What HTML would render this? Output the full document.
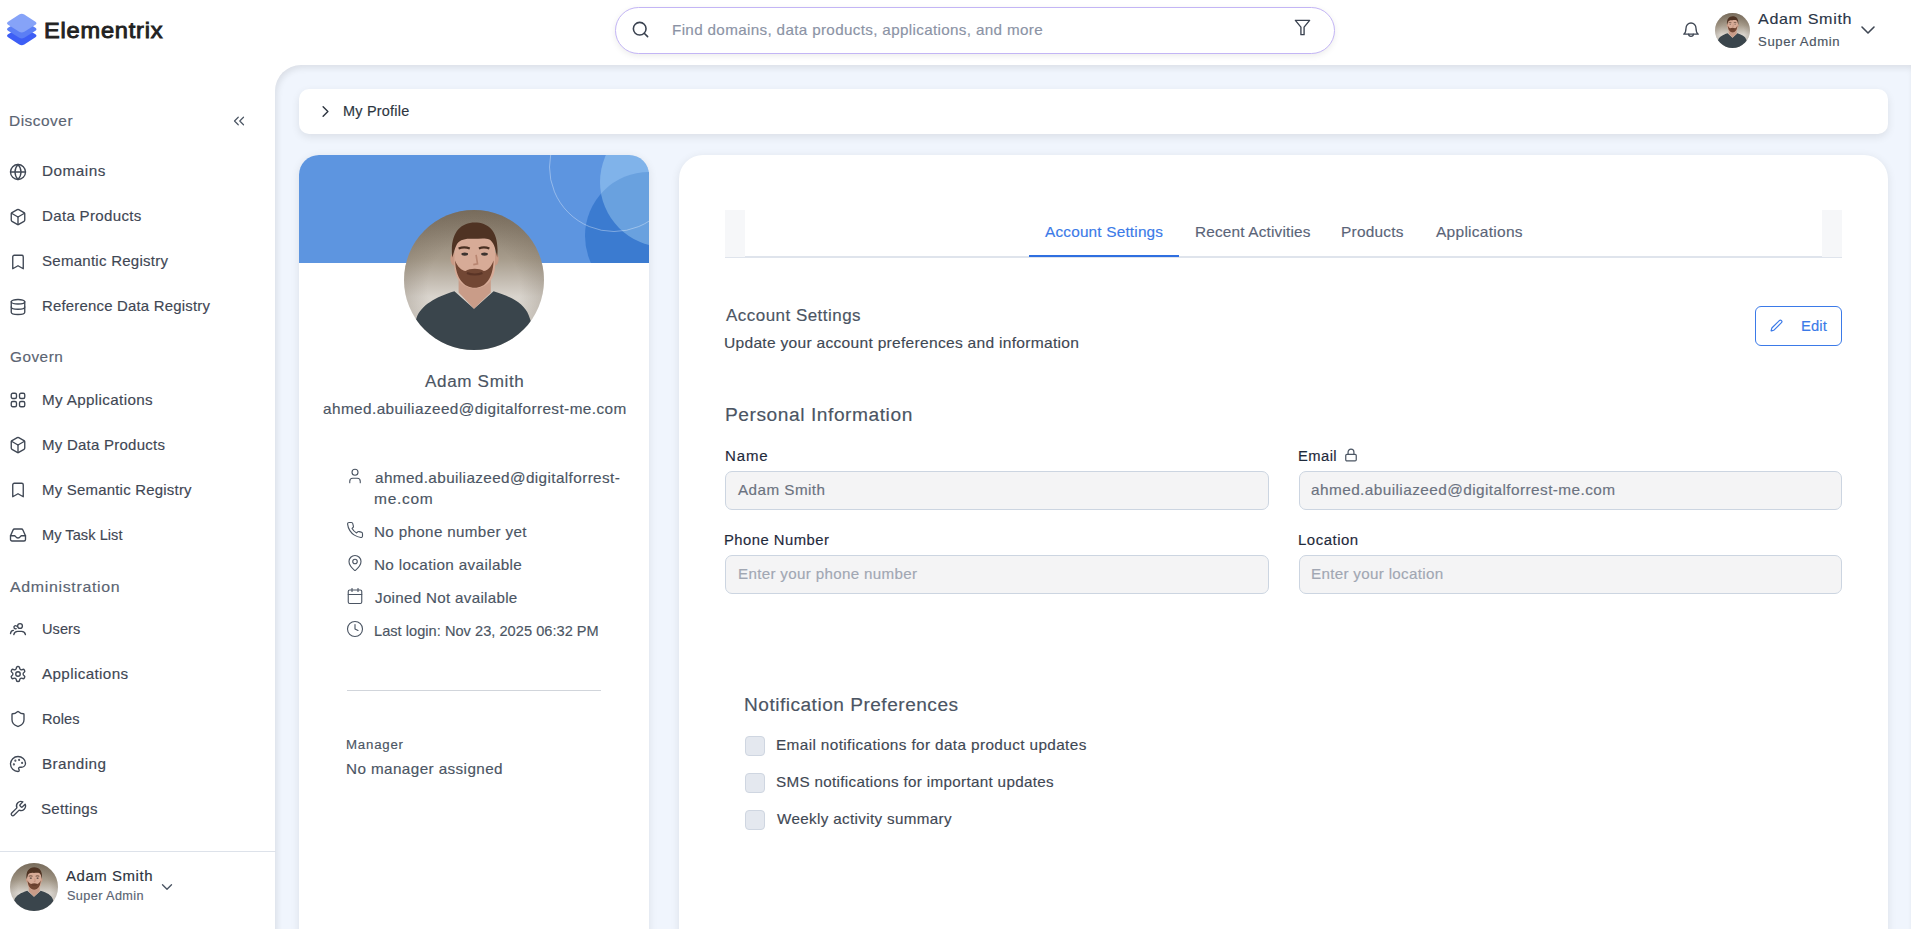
<!DOCTYPE html>
<html><head><meta charset="utf-8"><title>My Profile</title>
<style>
*{box-sizing:border-box;margin:0;padding:0}
html,body{width:1914px;height:929px;overflow:hidden;background:#fff;font-family:"Liberation Sans",sans-serif}
.t{position:absolute;white-space:nowrap;transform-origin:0 0;-webkit-text-stroke:0.15px currentColor}
.ic{position:absolute;overflow:visible}
.abs{position:absolute}
</style></head><body>
<div class="abs" style="left:275px;top:65px;width:1636px;height:900px;background:#f0f5fd;border-top-left-radius:26px;box-shadow:inset 2px 3px 6px rgba(0,0,0,0.09)"></div>
<div class="abs" style="left:0;top:851px;width:276px;height:1px;background:#dde2ea"></div>
<div class="abs" style="left:615px;top:7px;width:720px;height:47px;border:1px solid #c3b5f5;border-radius:24px;background:#fff;box-shadow:0 2px 6px rgba(0,0,0,0.08)"></div>
<svg class="ic" style="left:4.8px;top:13.2px;width:33.5px;height:34.5px" viewBox="0 0 33 34" preserveAspectRatio="none">
<path d="M16.5 13 L30 21 Q32 22.5 30 24 L19 31 Q16.5 32.6 14 31 L3 24 Q1 22.5 3 21 Z" fill="#3d5ef5"/>
<path d="M16.5 6.5 L30 14.5 Q32 16 30 17.5 L19 24.5 Q16.5 26 14 24.5 L3 17.5 Q1 16 3 14.5 Z" fill="#5b7ef5"/>
<path d="M14 1.5 Q16.5 0 19 1.5 L30 8.5 Q32 10 30 11.5 L19 18.5 Q16.5 20 14 18.5 L3 11.5 Q1 10 3 8.5 Z" fill="#86a3f8"/>
</svg>
<div class="abs" style="left:299px;top:89px;width:1589px;height:45px;background:#fff;border-radius:10px;box-shadow:0 3px 8px rgba(0,0,0,0.09)"></div>
<div class="abs" style="left:299px;top:155px;width:350px;height:800px;background:#fff;border-radius:20px;box-shadow:0 2px 10px rgba(0,0,0,0.09);overflow:hidden"><div class="abs" style="left:0;top:0;width:350px;height:108px;background:#5d95e0;overflow:hidden"><div class="abs" style="left:286px;top:17px;width:128px;height:128px;border-radius:50%;background:#3b7bd0"></div><div class="abs" style="left:301px;top:-38px;width:130px;height:130px;border-radius:50%;background:rgba(200,240,255,0.33)"></div><div class="abs" style="left:250px;top:-53px;width:130px;height:130px;border-radius:50%;border:1.5px solid rgba(255,255,255,0.35)"></div></div></div>
<svg class="ic" style="left:404.0px;top:210.0px;width:140px;height:140px" viewBox="0 0 100 100">
<defs><linearGradient id="bga" x1="0" y1="0" x2="0" y2="1"><stop offset="0" stop-color="#7b6f5f"/><stop offset="0.35" stop-color="#a79c8c"/><stop offset="0.62" stop-color="#d9d4cd"/><stop offset="1" stop-color="#e6e3de"/></linearGradient>
<radialGradient id="vga" cx="50%" cy="55%" r="55%"><stop offset="0.6" stop-color="#6f6353" stop-opacity="0"/><stop offset="1" stop-color="#6f6353" stop-opacity="0.3"/></radialGradient>
<clipPath id="cla"><circle cx="50" cy="50" r="50"/></clipPath></defs>
<g clip-path="url(#cla)">
<rect width="100" height="100" fill="url(#bga)"/>
<rect width="100" height="100" fill="url(#vga)"/>
<path d="M2 100 L9 77 C12 68 23 62 36 58 L50 70.5 L64 58 C77 62 86 67 89 75 L98 100 Z" fill="#3a454c"/>
<path d="M39 47 L39 59 L50 70.5 L62 59 L62 47 Z" fill="#c99c88"/>
<ellipse cx="35.8" cy="35" rx="2.6" ry="4.6" fill="#c99a85"/><ellipse cx="65" cy="35" rx="2.6" ry="4.6" fill="#c99a85"/>
<path d="M36 24 C36 16 43 14 50.5 14 C58 14 65 16 65 24 L65 40 C65 50 58 56 50.5 56 C43 56 36 50 36 40 Z" fill="#d7ab97"/>
<path d="M36.5 36 C37 49 43 55.5 50.5 55.5 C58 55.5 63.5 49 64 36 C62 41 60 43 57 43.5 C54 41.5 47 41.5 44 43.5 C41 43 38.5 41 36.5 36 Z" fill="#724734"/>
<path d="M45 45 C48 46.5 53 46.5 56 45" stroke="#5a3426" stroke-width="1.4" fill="none"/>
<path d="M39 27.5 Q43 26 47 27.5 M53.5 27.5 Q57 26 61 27.5" stroke="#4a3022" stroke-width="1.6" fill="none"/>
<ellipse cx="43.4" cy="31.5" rx="2.4" ry="1.1" fill="#3d3430"/><ellipse cx="57.5" cy="31.5" rx="2.4" ry="1.1" fill="#3d3430"/>
<path d="M51.5 32 L52.5 38.5 L49.5 39" stroke="#b88570" stroke-width="1.2" fill="none"/>
<path d="M34.5 34 C32.5 17 40 9 50.5 9 C61 9 68.5 16 66.5 34 C65.5 27 64 23 61 21 C57 19.5 52 21 47 20.5 C42 20.5 39 22 37.5 25 C36 28 35.5 31 34.5 34 Z" fill="#4f3323"/>
</g></svg>
<div class="abs" style="left:347px;top:690px;width:254px;height:1px;background:#d1d5db"></div>
<div class="abs" style="left:679px;top:155px;width:1209px;height:800px;background:#fff;border-radius:24px;box-shadow:0 2px 10px rgba(0,0,0,0.09)"></div>
<div class="abs" style="left:725px;top:256px;width:1117px;height:2px;background:#dfe4ec"></div>
<div class="abs" style="left:725px;top:210px;width:20px;height:47px;background:#f6f7f9"></div>
<div class="abs" style="left:1822px;top:210px;width:20px;height:47px;background:#f6f7f9"></div>
<div class="abs" style="left:1029px;top:255px;width:150px;height:2px;background:#2f6fe0"></div>
<div class="abs" style="left:1755px;top:306px;width:87px;height:40px;border:1.3px solid #3b7ae8;border-radius:6px"></div>
<div class="abs" style="left:725px;top:471px;width:544px;height:39px;background:#f4f4f5;border:1px solid #ccd5e1;border-radius:7px"></div>
<div class="abs" style="left:1299px;top:471px;width:543px;height:39px;background:#f4f4f5;border:1px solid #ccd5e1;border-radius:7px"></div>
<div class="abs" style="left:725px;top:555px;width:544px;height:39px;background:#f4f4f5;border:1px solid #ccd5e1;border-radius:7px"></div>
<div class="abs" style="left:1299px;top:555px;width:543px;height:39px;background:#f4f4f5;border:1px solid #ccd5e1;border-radius:7px"></div>
<div class="abs" style="left:745px;top:736px;width:20px;height:20px;background:#e4e8ef;border:1px solid #cfd6e1;border-radius:4px"></div>
<div class="abs" style="left:745px;top:773px;width:20px;height:20px;background:#e4e8ef;border:1px solid #cfd6e1;border-radius:4px"></div>
<div class="abs" style="left:745px;top:810px;width:20px;height:20px;background:#e4e8ef;border:1px solid #cfd6e1;border-radius:4px"></div>
<svg class="ic" style="left:1715.0px;top:12.8px;width:35px;height:35px" viewBox="0 0 100 100">
<defs><linearGradient id="bgb" x1="0" y1="0" x2="0" y2="1"><stop offset="0" stop-color="#7b6f5f"/><stop offset="0.35" stop-color="#a79c8c"/><stop offset="0.62" stop-color="#d9d4cd"/><stop offset="1" stop-color="#e6e3de"/></linearGradient>
<radialGradient id="vgb" cx="50%" cy="55%" r="55%"><stop offset="0.6" stop-color="#6f6353" stop-opacity="0"/><stop offset="1" stop-color="#6f6353" stop-opacity="0.3"/></radialGradient>
<clipPath id="clb"><circle cx="50" cy="50" r="50"/></clipPath></defs>
<g clip-path="url(#clb)">
<rect width="100" height="100" fill="url(#bgb)"/>
<rect width="100" height="100" fill="url(#vgb)"/>
<path d="M2 100 L9 77 C12 68 23 62 36 58 L50 70.5 L64 58 C77 62 86 67 89 75 L98 100 Z" fill="#3a454c"/>
<path d="M39 47 L39 59 L50 70.5 L62 59 L62 47 Z" fill="#c99c88"/>
<ellipse cx="35.8" cy="35" rx="2.6" ry="4.6" fill="#c99a85"/><ellipse cx="65" cy="35" rx="2.6" ry="4.6" fill="#c99a85"/>
<path d="M36 24 C36 16 43 14 50.5 14 C58 14 65 16 65 24 L65 40 C65 50 58 56 50.5 56 C43 56 36 50 36 40 Z" fill="#d7ab97"/>
<path d="M36.5 36 C37 49 43 55.5 50.5 55.5 C58 55.5 63.5 49 64 36 C62 41 60 43 57 43.5 C54 41.5 47 41.5 44 43.5 C41 43 38.5 41 36.5 36 Z" fill="#724734"/>
<path d="M45 45 C48 46.5 53 46.5 56 45" stroke="#5a3426" stroke-width="1.4" fill="none"/>
<path d="M39 27.5 Q43 26 47 27.5 M53.5 27.5 Q57 26 61 27.5" stroke="#4a3022" stroke-width="1.6" fill="none"/>
<ellipse cx="43.4" cy="31.5" rx="2.4" ry="1.1" fill="#3d3430"/><ellipse cx="57.5" cy="31.5" rx="2.4" ry="1.1" fill="#3d3430"/>
<path d="M51.5 32 L52.5 38.5 L49.5 39" stroke="#b88570" stroke-width="1.2" fill="none"/>
<path d="M34.5 34 C32.5 17 40 9 50.5 9 C61 9 68.5 16 66.5 34 C65.5 27 64 23 61 21 C57 19.5 52 21 47 20.5 C42 20.5 39 22 37.5 25 C36 28 35.5 31 34.5 34 Z" fill="#4f3323"/>
</g></svg>
<svg class="ic" style="left:10.0px;top:863.0px;width:48px;height:48px" viewBox="0 0 100 100">
<defs><linearGradient id="bgc" x1="0" y1="0" x2="0" y2="1"><stop offset="0" stop-color="#7b6f5f"/><stop offset="0.35" stop-color="#a79c8c"/><stop offset="0.62" stop-color="#d9d4cd"/><stop offset="1" stop-color="#e6e3de"/></linearGradient>
<radialGradient id="vgc" cx="50%" cy="55%" r="55%"><stop offset="0.6" stop-color="#6f6353" stop-opacity="0"/><stop offset="1" stop-color="#6f6353" stop-opacity="0.3"/></radialGradient>
<clipPath id="clc"><circle cx="50" cy="50" r="50"/></clipPath></defs>
<g clip-path="url(#clc)">
<rect width="100" height="100" fill="url(#bgc)"/>
<rect width="100" height="100" fill="url(#vgc)"/>
<path d="M2 100 L9 77 C12 68 23 62 36 58 L50 70.5 L64 58 C77 62 86 67 89 75 L98 100 Z" fill="#3a454c"/>
<path d="M39 47 L39 59 L50 70.5 L62 59 L62 47 Z" fill="#c99c88"/>
<ellipse cx="35.8" cy="35" rx="2.6" ry="4.6" fill="#c99a85"/><ellipse cx="65" cy="35" rx="2.6" ry="4.6" fill="#c99a85"/>
<path d="M36 24 C36 16 43 14 50.5 14 C58 14 65 16 65 24 L65 40 C65 50 58 56 50.5 56 C43 56 36 50 36 40 Z" fill="#d7ab97"/>
<path d="M36.5 36 C37 49 43 55.5 50.5 55.5 C58 55.5 63.5 49 64 36 C62 41 60 43 57 43.5 C54 41.5 47 41.5 44 43.5 C41 43 38.5 41 36.5 36 Z" fill="#724734"/>
<path d="M45 45 C48 46.5 53 46.5 56 45" stroke="#5a3426" stroke-width="1.4" fill="none"/>
<path d="M39 27.5 Q43 26 47 27.5 M53.5 27.5 Q57 26 61 27.5" stroke="#4a3022" stroke-width="1.6" fill="none"/>
<ellipse cx="43.4" cy="31.5" rx="2.4" ry="1.1" fill="#3d3430"/><ellipse cx="57.5" cy="31.5" rx="2.4" ry="1.1" fill="#3d3430"/>
<path d="M51.5 32 L52.5 38.5 L49.5 39" stroke="#b88570" stroke-width="1.2" fill="none"/>
<path d="M34.5 34 C32.5 17 40 9 50.5 9 C61 9 68.5 16 66.5 34 C65.5 27 64 23 61 21 C57 19.5 52 21 47 20.5 C42 20.5 39 22 37.5 25 C36 28 35.5 31 34.5 34 Z" fill="#4f3323"/>
</g></svg>
<div class="abs" style="left:1911px;top:0;width:3px;height:929px;background:#fff"></div>
<svg class="ic" style="left:9.0px;top:162.8px;width:18px;height:18px" viewBox="0 0 24 24" fill="none" stroke="#3f4754" stroke-width="1.8" stroke-linecap="round" stroke-linejoin="round"><circle cx="12" cy="12" r="10"/><path d="M12 2a14.5 14.5 0 0 0 0 20 14.5 14.5 0 0 0 0-20"/><path d="M2 12h20"/></svg>
<svg class="ic" style="left:9.0px;top:208.0px;width:18px;height:18px" viewBox="0 0 24 24" fill="none" stroke="#3f4754" stroke-width="1.8" stroke-linecap="round" stroke-linejoin="round"><path d="M21 8a2 2 0 0 0-1-1.73l-7-4a2 2 0 0 0-2 0l-7 4A2 2 0 0 0 3 8v8a2 2 0 0 0 1 1.73l7 4a2 2 0 0 0 2 0l7-4A2 2 0 0 0 21 16Z"/><path d="m3.3 7 8.7 5 8.7-5"/><path d="M12 22V12"/></svg>
<svg class="ic" style="left:9.0px;top:253.0px;width:18px;height:18px" viewBox="0 0 24 24" fill="none" stroke="#3f4754" stroke-width="1.8" stroke-linecap="round" stroke-linejoin="round"><path d="m19 21-7-4-7 4V5a2 2 0 0 1 2-2h10a2 2 0 0 1 2 2v16z"/></svg>
<svg class="ic" style="left:9.0px;top:297.8px;width:18px;height:18px" viewBox="0 0 24 24" fill="none" stroke="#3f4754" stroke-width="1.8" stroke-linecap="round" stroke-linejoin="round"><ellipse cx="12" cy="5" rx="9" ry="3"/><path d="M3 5V19A9 3 0 0 0 21 19V5"/><path d="M3 12A9 3 0 0 0 21 12"/></svg>
<svg class="ic" style="left:9.0px;top:391.0px;width:18px;height:18px" viewBox="0 0 24 24" fill="none" stroke="#3f4754" stroke-width="1.8" stroke-linecap="round" stroke-linejoin="round"><rect width="7" height="7" x="3" y="3" rx="2"/><rect width="7" height="7" x="14" y="3" rx="2"/><rect width="7" height="7" x="14" y="14" rx="2"/><rect width="7" height="7" x="3" y="14" rx="2"/></svg>
<svg class="ic" style="left:9.0px;top:436.0px;width:18px;height:18px" viewBox="0 0 24 24" fill="none" stroke="#3f4754" stroke-width="1.8" stroke-linecap="round" stroke-linejoin="round"><path d="M21 8a2 2 0 0 0-1-1.73l-7-4a2 2 0 0 0-2 0l-7 4A2 2 0 0 0 3 8v8a2 2 0 0 0 1 1.73l7 4a2 2 0 0 0 2 0l7-4A2 2 0 0 0 21 16Z"/><path d="m3.3 7 8.7 5 8.7-5"/><path d="M12 22V12"/></svg>
<svg class="ic" style="left:9.0px;top:481.0px;width:18px;height:18px" viewBox="0 0 24 24" fill="none" stroke="#3f4754" stroke-width="1.8" stroke-linecap="round" stroke-linejoin="round"><path d="m19 21-7-4-7 4V5a2 2 0 0 1 2-2h10a2 2 0 0 1 2 2v16z"/></svg>
<svg class="ic" style="left:9.0px;top:525.5px;width:18px;height:18px" viewBox="0 0 24 24" fill="none" stroke="#3f4754" stroke-width="1.8" stroke-linecap="round" stroke-linejoin="round"><path d="M2 13 L5.5 5.2 A2 2 0 0 1 7.3 4 H16.7 A2 2 0 0 1 18.5 5.2 L22 13 V18 A2 2 0 0 1 20 20 H4 A2 2 0 0 1 2 18 Z"/><path d="M2 13 H7.5 C8.5 13 9 16 12 16 C15 16 15.5 13 16.5 13 H22"/></svg>
<svg class="ic" style="left:9.0px;top:620.0px;width:18px;height:18px" viewBox="0 0 24 24" fill="none" stroke="#3f4754" stroke-width="1.8" stroke-linecap="round" stroke-linejoin="round"><circle cx="14.7" cy="8" r="3.2"/><path d="M9.6 11.6 A2.1 2.1 0 1 1 10.2 8.2"/><path d="M6.4 19.5 C7 16.5 9 15.2 11.5 15.2 H16.8 C19.3 15.2 21.3 16.5 21.9 19.5"/><path d="M2 18.2 C2.3 15.6 3.8 14 5.9 13.8"/></svg>
<svg class="ic" style="left:9.0px;top:665.0px;width:18px;height:18px" viewBox="0 0 24 24" fill="none" stroke="#3f4754" stroke-width="1.8" stroke-linecap="round" stroke-linejoin="round"><path d="M12.22 2h-.44a2 2 0 0 0-2 2v.18a2 2 0 0 1-1 1.73l-.43.25a2 2 0 0 1-2 0l-.15-.08a2 2 0 0 0-2.73.73l-.22.38a2 2 0 0 0 .73 2.73l.15.1a2 2 0 0 1 1 1.72v.51a2 2 0 0 1-1 1.74l-.15.09a2 2 0 0 0-.73 2.73l.22.38a2 2 0 0 0 2.73.73l.15-.08a2 2 0 0 1 2 0l.43.25a2 2 0 0 1 1 1.73V20a2 2 0 0 0 2 2h.44a2 2 0 0 0 2-2v-.18a2 2 0 0 1 1-1.73l.43-.25a2 2 0 0 1 2 0l.15.08a2 2 0 0 0 2.73-.73l.22-.39a2 2 0 0 0-.73-2.73l-.15-.08a2 2 0 0 1-1-1.74v-.5a2 2 0 0 1 1-1.74l.15-.09a2 2 0 0 0 .73-2.73l-.22-.38a2 2 0 0 0-2.73-.73l-.15.08a2 2 0 0 1-2 0l-.43-.25a2 2 0 0 1-1-1.73V4a2 2 0 0 0-2-2z"/><circle cx="12" cy="12" r="3"/></svg>
<svg class="ic" style="left:9.0px;top:710.0px;width:18px;height:18px" viewBox="0 0 24 24" fill="none" stroke="#3f4754" stroke-width="1.8" stroke-linecap="round" stroke-linejoin="round"><path d="M20 13c0 5-3.5 7.5-7.66 8.95a1 1 0 0 1-.67-.01C7.5 20.5 4 18 4 13V6a1 1 0 0 1 1-1c2 0 4.5-1.2 6.24-2.72a1.17 1.17 0 0 1 1.52 0C14.51 3.81 17 5 19 5a1 1 0 0 1 1 1z"/></svg>
<svg class="ic" style="left:9.0px;top:754.5px;width:18px;height:18px" viewBox="0 0 24 24" fill="none" stroke="#3f4754" stroke-width="1.8" stroke-linecap="round" stroke-linejoin="round"><circle cx="13.5" cy="6.5" r=".5" fill="currentColor"/><circle cx="17.5" cy="10.5" r=".5" fill="currentColor"/><circle cx="8.5" cy="7.5" r=".5" fill="currentColor"/><circle cx="6.5" cy="12.5" r=".5" fill="currentColor"/><path d="M12 2C6.5 2 2 6.5 2 12s4.5 10 10 10c.926 0 1.648-.746 1.648-1.688 0-.437-.18-.835-.437-1.125-.29-.289-.438-.652-.438-1.125a1.64 1.64 0 0 1 1.668-1.668h1.996c3.051 0 5.555-2.503 5.555-5.554C21.965 6.012 17.461 2 12 2z"/></svg>
<svg class="ic" style="left:9.0px;top:800.0px;width:18px;height:18px" viewBox="0 0 24 24" fill="none" stroke="#3f4754" stroke-width="1.8" stroke-linecap="round" stroke-linejoin="round"><path d="M14.7 6.3a1 1 0 0 0 0 1.4l1.6 1.6a1 1 0 0 0 1.4 0l3.77-3.77a6 6 0 0 1-7.94 7.94l-6.91 6.91a2.12 2.12 0 0 1-3-3l6.91-6.91a6 6 0 0 1 7.94-7.94l-3.76 3.76z"/></svg>
<svg class="ic" style="left:230.0px;top:112.0px;width:18px;height:18px" viewBox="0 0 24 24" fill="none" stroke="#4b5563" stroke-width="1.6" stroke-linecap="round" stroke-linejoin="round"><path d="m11 17-5-5 5-5"/><path d="m18 17-5-5 5-5"/></svg>
<svg class="ic" style="left:631.0px;top:20.0px;width:19px;height:19px" viewBox="0 0 24 24" fill="none" stroke="#3a4250" stroke-width="2" stroke-linecap="round" stroke-linejoin="round"><circle cx="11" cy="11" r="8"/><path d="m21 21-4.3-4.3"/></svg>
<svg class="ic" style="left:1293.0px;top:18.0px;width:19px;height:19px" viewBox="0 0 24 24" fill="none" stroke="#3a4250" stroke-width="1.7" stroke-linecap="round" stroke-linejoin="round"><path d="M3 3h18l-7 8.5V21h-4v-9.5z"/></svg>
<svg class="ic" style="left:1681.1px;top:21.2px;width:20px;height:20px" viewBox="0 0 24 24" fill="none" stroke="#3f4754" stroke-width="1.6" stroke-linecap="round" stroke-linejoin="round"><path d="M3.3 15.8 H20.7 C18.3 14 18 12 18 8.6 A6 6.2 0 0 0 6 8.6 C6 12 5.7 14 3.3 15.8 Z"/><path d="M9.2 15.9 A2.8 2.5 0 0 0 14.8 15.9"/></svg>
<svg class="ic" style="left:1856.0px;top:18.0px;width:24px;height:24px" viewBox="0 0 24 24" fill="none" stroke="#3f4754" stroke-width="1.6" stroke-linecap="round" stroke-linejoin="round"><path d="m6 9 6 6 6-6"/></svg>
<svg class="ic" style="left:158.0px;top:878.0px;width:18px;height:18px" viewBox="0 0 24 24" fill="none" stroke="#4b5563" stroke-width="1.8" stroke-linecap="round" stroke-linejoin="round"><path d="m6 9 6 6 6-6"/></svg>
<svg class="ic" style="left:316.0px;top:102.0px;width:19px;height:19px" viewBox="0 0 24 24" fill="none" stroke="#2d3540" stroke-width="1.8" stroke-linecap="round" stroke-linejoin="round"><path d="m9 18 6-6-6-6"/></svg>
<svg class="ic" style="left:346.0px;top:467.0px;width:18px;height:18px" viewBox="0 0 24 24" fill="none" stroke="#4b5563" stroke-width="1.5" stroke-linecap="round" stroke-linejoin="round"><path d="M19 21v-2a4 4 0 0 0-4-4H9a4 4 0 0 0-4 4v2"/><circle cx="12" cy="7" r="4"/></svg>
<svg class="ic" style="left:346.0px;top:521.0px;width:18px;height:18px" viewBox="0 0 24 24" fill="none" stroke="#4b5563" stroke-width="1.5" stroke-linecap="round" stroke-linejoin="round"><path d="M22 16.92v3a2 2 0 0 1-2.18 2 19.79 19.79 0 0 1-8.63-3.07 19.5 19.5 0 0 1-6-6 19.79 19.79 0 0 1-3.07-8.67A2 2 0 0 1 4.11 2h3a2 2 0 0 1 2 1.72 12.84 12.84 0 0 0 .7 2.81 2 2 0 0 1-.45 2.11L8.09 9.91a16 16 0 0 0 6 6l1.27-1.27a2 2 0 0 1 2.11-.45 12.84 12.84 0 0 0 2.81.7A2 2 0 0 1 22 16.92z"/></svg>
<svg class="ic" style="left:346.0px;top:554.0px;width:18px;height:18px" viewBox="0 0 24 24" fill="none" stroke="#4b5563" stroke-width="1.5" stroke-linecap="round" stroke-linejoin="round"><path d="M20 10c0 4.993-5.539 10.193-7.399 11.799a1 1 0 0 1-1.202 0C9.539 20.193 4 14.993 4 10a8 8 0 0 1 16 0"/><circle cx="12" cy="10" r="3"/></svg>
<svg class="ic" style="left:346.0px;top:587.0px;width:18px;height:18px" viewBox="0 0 24 24" fill="none" stroke="#4b5563" stroke-width="1.5" stroke-linecap="round" stroke-linejoin="round"><path d="M8 2v4"/><path d="M16 2v4"/><rect width="18" height="18" x="3" y="4" rx="2"/><path d="M3 10h18"/></svg>
<svg class="ic" style="left:346.0px;top:620.0px;width:18px;height:18px" viewBox="0 0 24 24" fill="none" stroke="#4b5563" stroke-width="1.5" stroke-linecap="round" stroke-linejoin="round"><circle cx="12" cy="12" r="10"/><polyline points="12 6 12 12 16 14"/></svg>
<svg class="ic" style="left:1770.3px;top:318.9px;width:13px;height:13px" viewBox="0 0 24 24" fill="none" stroke="#3b7ae8" stroke-width="2.1" stroke-linecap="round" stroke-linejoin="round"><path d="M21.174 6.812a1 1 0 0 0-3.986-3.987L3.842 16.174a2 2 0 0 0-.5.83l-1.321 4.352a.5.5 0 0 0 .623.622l4.353-1.32a2 2 0 0 0 .83-.497z"/></svg>
<svg class="ic" style="left:1343.9px;top:448.4px;width:14px;height:14px" viewBox="0 0 24 24" fill="none" stroke="#4b5563" stroke-width="2.1" stroke-linecap="round" stroke-linejoin="round"><rect width="18" height="11" x="3" y="11" rx="2" ry="2"/><path d="M7 11V7a5 5 0 0 1 10 0v4"/></svg>
<div class="t" style="left:44.21px;top:17.30px;font-size:22.0px;line-height:28px;letter-spacing:0.754px;color:#222222;-webkit-text-stroke:0.9px currentColor;transform:scaleX(1.0712)">Elementrix</div>
<div class="t" style="left:9.07px;top:111.60px;font-size:14.5px;line-height:19px;letter-spacing:0.474px;color:#5b6472;transform:scaleX(1.0643)">Discover</div>
<div class="t" style="left:41.86px;top:161.50px;font-size:14.5px;line-height:19px;letter-spacing:0.479px;color:#3f4754;transform:scaleX(1.0546)">Domains</div>
<div class="t" style="left:41.87px;top:206.50px;font-size:14.5px;line-height:19px;letter-spacing:0.295px;color:#3f4754;transform:scaleX(1.0409)">Data Products</div>
<div class="t" style="left:41.92px;top:251.50px;font-size:14.5px;line-height:19px;letter-spacing:0.253px;color:#3f4754;transform:scaleX(1.0358)">Semantic Registry</div>
<div class="t" style="left:41.89px;top:296.50px;font-size:14.5px;line-height:19px;letter-spacing:0.201px;color:#3f4754;transform:scaleX(1.0288)">Reference Data Registry</div>
<div class="t" style="left:10.39px;top:347.60px;font-size:14.5px;line-height:19px;letter-spacing:0.486px;color:#5b6472;transform:scaleX(1.0559)">Govern</div>
<div class="t" style="left:41.68px;top:391.45px;font-size:14.5px;line-height:19px;letter-spacing:0.334px;color:#3f4754;transform:scaleX(1.0495)">My Applications</div>
<div class="t" style="left:41.70px;top:436.45px;font-size:14.5px;line-height:19px;letter-spacing:0.247px;color:#3f4754;transform:scaleX(1.0338)">My Data Products</div>
<div class="t" style="left:41.70px;top:481.45px;font-size:14.5px;line-height:19px;letter-spacing:0.218px;color:#3f4754;transform:scaleX(1.0305)">My Semantic Registry</div>
<div class="t" style="left:41.73px;top:526.45px;font-size:14.5px;line-height:19px;letter-spacing:0.044px;color:#3f4754;transform:scaleX(1.0062)">My Task List</div>
<div class="t" style="left:10.30px;top:578.02px;font-size:14.5px;line-height:19px;letter-spacing:0.620px;color:#5b6472;transform:scaleX(1.0973)">Administration</div>
<div class="t" style="left:41.81px;top:619.50px;font-size:14.5px;line-height:19px;letter-spacing:0.039px;color:#3f4754;transform:scaleX(1.0043)">Users</div>
<div class="t" style="left:42.10px;top:664.50px;font-size:14.5px;line-height:19px;letter-spacing:0.342px;color:#3f4754;transform:scaleX(1.0510)">Applications</div>
<div class="t" style="left:41.73px;top:709.50px;font-size:14.5px;line-height:19px;letter-spacing:0.052px;color:#3f4754;transform:scaleX(1.0059)">Roles</div>
<div class="t" style="left:41.68px;top:754.50px;font-size:14.5px;line-height:19px;letter-spacing:0.391px;color:#3f4754;transform:scaleX(1.0515)">Branding</div>
<div class="t" style="left:41.42px;top:799.50px;font-size:14.5px;line-height:19px;letter-spacing:0.284px;color:#3f4754;transform:scaleX(1.0404)">Settings</div>
<div class="t" style="left:66.28px;top:867.00px;font-size:14.0px;line-height:18px;letter-spacing:0.530px;color:#2d3440;transform:scaleX(1.0676)">Adam Smith</div>
<div class="t" style="left:66.51px;top:889.20px;font-size:12.0px;line-height:15px;letter-spacing:0.370px;color:#5b6472;transform:scaleX(1.0580)">Super Admin</div>
<div class="t" style="left:671.68px;top:20.50px;font-size:14.5px;line-height:19px;letter-spacing:0.320px;color:#8b93a5;transform:scaleX(1.0502)">Find domains, data products, applications, and more</div>
<div class="t" style="left:1758.10px;top:9.00px;font-size:15.0px;line-height:19px;letter-spacing:0.605px;color:#2a3547;transform:scaleX(1.0724)">Adam Smith</div>
<div class="t" style="left:1758.31px;top:34.66px;font-size:12.0px;line-height:15px;letter-spacing:0.585px;color:#4b5563;transform:scaleX(1.0951)">Super Admin</div>
<div class="t" style="left:342.64px;top:102.00px;font-size:14.0px;line-height:18px;letter-spacing:0.210px;color:#2d3540;transform:scaleX(1.0322)">My Profile</div>
<div class="t" style="left:425.20px;top:371.70px;font-size:16.0px;line-height:20px;letter-spacing:0.605px;color:#4b5563;transform:scaleX(1.0675)">Adam Smith</div>
<div class="t" style="left:323.01px;top:400.02px;font-size:14.5px;line-height:19px;letter-spacing:0.390px;color:#4b5563;transform:scaleX(1.0580)">ahmed.abuiliazeed@digitalforrest-me.com</div>
<div class="t" style="left:374.69px;top:468.64px;font-size:14.5px;line-height:19px;letter-spacing:0.362px;color:#4b5563;transform:scaleX(1.0558)">ahmed.abuiliazeed@digitalforrest-</div>
<div class="t" style="left:374.29px;top:489.60px;font-size:14.5px;line-height:19px;letter-spacing:0.660px;color:#4b5563;transform:scaleX(1.0710)">me.com</div>
<div class="t" style="left:374.09px;top:523.02px;font-size:14.5px;line-height:19px;letter-spacing:0.343px;color:#4b5563;transform:scaleX(1.0467)">No phone number yet</div>
<div class="t" style="left:374.08px;top:556.21px;font-size:14.5px;line-height:19px;letter-spacing:0.330px;color:#4b5563;transform:scaleX(1.0526)">No location available</div>
<div class="t" style="left:375.07px;top:588.64px;font-size:14.5px;line-height:19px;letter-spacing:0.294px;color:#4b5563;transform:scaleX(1.0450)">Joined Not available</div>
<div class="t" style="left:374.13px;top:621.50px;font-size:14.5px;line-height:19px;letter-spacing:0.035px;color:#4b5563;transform:scaleX(1.0052)">Last login: Nov 23, 2025 06:32 PM</div>
<div class="t" style="left:346.34px;top:737.80px;font-size:12.0px;line-height:15px;letter-spacing:0.721px;color:#4b5563;transform:scaleX(1.1032)">Manager</div>
<div class="t" style="left:346.18px;top:759.70px;font-size:14.5px;line-height:19px;letter-spacing:0.385px;color:#4b5563;transform:scaleX(1.0522)">No manager assigned</div>
<div class="t" style="left:1045.10px;top:222.40px;font-size:15.0px;line-height:19px;letter-spacing:0.177px;color:#3b7ae8;transform:scaleX(1.0243)">Account Settings</div>
<div class="t" style="left:1194.67px;top:222.40px;font-size:15.0px;line-height:19px;letter-spacing:0.165px;color:#5a6478;transform:scaleX(1.0249)">Recent Activities</div>
<div class="t" style="left:1340.77px;top:222.40px;font-size:15.0px;line-height:19px;letter-spacing:0.226px;color:#5a6478;transform:scaleX(1.0283)">Products</div>
<div class="t" style="left:1435.70px;top:222.40px;font-size:15.0px;line-height:19px;letter-spacing:0.249px;color:#5a6478;transform:scaleX(1.0353)">Applications</div>
<div class="t" style="left:725.90px;top:305.70px;font-size:16.0px;line-height:20px;letter-spacing:0.455px;color:#4b5563;transform:scaleX(1.0606)">Account Settings</div>
<div class="t" style="left:724.13px;top:333.20px;font-size:15.0px;line-height:19px;letter-spacing:0.266px;color:#3f4854;transform:scaleX(1.0388)">Update your account preferences and information</div>
<div class="t" style="left:1800.72px;top:316.70px;font-size:14.5px;line-height:19px;letter-spacing:0.146px;color:#3b7ae8;transform:scaleX(1.0188)">Edit</div>
<div class="t" style="left:725.09px;top:403.60px;font-size:18.0px;line-height:23px;letter-spacing:0.520px;color:#4b5563;transform:scaleX(1.0644)">Personal Information</div>
<div class="t" style="left:724.60px;top:446.90px;font-size:14.0px;line-height:18px;letter-spacing:0.805px;color:#1f2a3c;transform:scaleX(1.0728)">Name</div>
<div class="t" style="left:1297.92px;top:447.26px;font-size:14.0px;line-height:18px;letter-spacing:0.419px;color:#1f2a3c;transform:scaleX(1.0535)">Email</div>
<div class="t" style="left:738.40px;top:481.21px;font-size:14.5px;line-height:19px;letter-spacing:0.422px;color:#6b7280;transform:scaleX(1.0512)">Adam Smith</div>
<div class="t" style="left:1311.11px;top:481.21px;font-size:14.5px;line-height:19px;letter-spacing:0.400px;color:#6b7280;transform:scaleX(1.0596)">ahmed.abuiliazeed@digitalforrest-me.com</div>
<div class="t" style="left:724.22px;top:531.26px;font-size:14.0px;line-height:18px;letter-spacing:0.459px;color:#1f2a3c;transform:scaleX(1.0575)">Phone Number</div>
<div class="t" style="left:1297.60px;top:531.26px;font-size:14.0px;line-height:18px;letter-spacing:0.476px;color:#1f2a3c;transform:scaleX(1.0701)">Location</div>
<div class="t" style="left:737.69px;top:564.60px;font-size:14.5px;line-height:19px;letter-spacing:0.314px;color:#a1a7b3;transform:scaleX(1.0443)">Enter your phone number</div>
<div class="t" style="left:1310.51px;top:564.60px;font-size:14.5px;line-height:19px;letter-spacing:0.296px;color:#a1a7b3;transform:scaleX(1.0469)">Enter your location</div>
<div class="t" style="left:744.37px;top:693.70px;font-size:18.0px;line-height:23px;letter-spacing:0.468px;color:#4b5563;transform:scaleX(1.0604)">Notification Preferences</div>
<div class="t" style="left:776.07px;top:735.60px;font-size:14.5px;line-height:19px;letter-spacing:0.353px;color:#3f4854;transform:scaleX(1.0582)">Email notifications for data product updates</div>
<div class="t" style="left:776.06px;top:772.60px;font-size:14.5px;line-height:19px;letter-spacing:0.308px;color:#3f4854;transform:scaleX(1.0487)">SMS notifications for important updates</div>
<div class="t" style="left:777.22px;top:810.26px;font-size:14.5px;line-height:19px;letter-spacing:0.333px;color:#3f4854;transform:scaleX(1.0482)">Weekly activity summary</div>
</body></html>
